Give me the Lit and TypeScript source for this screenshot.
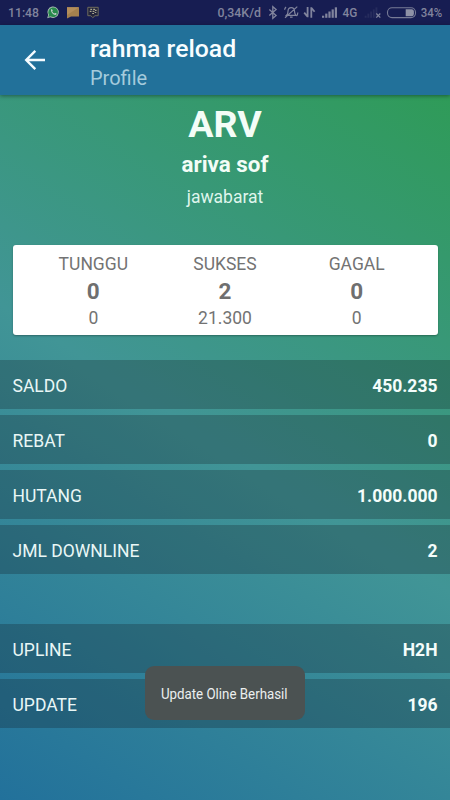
import { LitElement, html, css, svg } from "lit";
import { customElement, property } from "lit/decorators.js";

@customElement("status-bar")
class StatusBar extends LitElement {
  static styles = css`
    :host { display: block; height: 25px; background: #171d52; }
    svg { display: block; width: 100%; height: 25px; }
    text { font-family: Roboto, sans-serif; font-weight: 500; font-size: 13px; fill: #81849d; }
  `;
  render() {
    const bars = [1, 2, 3, 4, 5];
    return html`<svg viewBox="0 0 450 25">
      <text x="8" y="17.2" textLength="31" lengthAdjust="spacingAndGlyphs">11:48</text>
      <path d="M47.2 18.2l.9-3.2a5.7 5.7 0 1 1 2.2 2.2z" fill="#a5b8b0"/>
      <path d="M48.4 17l.7-2.2a4.8 4.8 0 1 1 1.5 1.5z" fill="#278a4c"/>
      <path d="M51 9.6c.6-.7 1.1-.5 1.4.2.4.9.4 1-.2 1.7.5 1 1.2 1.7 2.2 2.1.7-.8.8-.8 1.7-.3.7.3.7.7.2 1.3-1.5 1.4-5.7-1.6-5.3-5z" fill="#c2d0ca"/>
      <path d="M67 7.2h12v9.3H71l-4 2z" fill="#a5804e"/>
      <path d="M67 7.2h12L67 15z" fill="#b48d5b"/>
      <path d="M87.8 7.3h10.4v8.4h-3.2l-2.2 2-2-2h-3z" fill="#22243c" stroke="#777360" stroke-width=".9"/>
      <path d="M90.3 9.3h1.8M93.2 9.3h1.8M89.7 11.4h1.8M92.6 11.4h1.8M92.2 13.5h1.8M95 10.4h1.6M94.7 12.5h1.6" stroke="#aaa78f" stroke-width="1.2" fill="none"/>
      <text x="217.5" y="17.2" textLength="43.5" lengthAdjust="spacingAndGlyphs">0,34K/d</text>
      <path d="M269.3 9.5l6.8 6-3.3 2.8V6.7l3.3 2.8-6.8 6" fill="none" stroke="#81849d" stroke-width="1.3"/>
      <path d="M286.5 15.3c1.6-1.5 1.3-2.6 1.5-4.3.3-4.4 6.2-4.4 6.5 0 .2 1.7 0 2.8 1.5 4.3zM290 17.2h2.6M285 17.7L297.3 6.6M284.6 9.8c.1-1.2.6-2 1.4-2.8M297.8 12.5c0 1.6-.3 2.6-1.3 3.5" fill="none" stroke="#81849d" stroke-width="1.2"/>
      <path d="M307.6 7v10.300M304.2 12.6l3.4 4M311.3 17.7V7.2M311.3 7.8l3.300 4" fill="none" stroke="#81849d" stroke-width="1.8"/>
      ${bars.map((n) => svg`<rect x=${318.8 + n * 3.2} y=${17.8 - n * 2.1} width="2.2" height=${n * 2.1} fill="#81849d"/>`)}
      <text x="342.5" y="17.2" textLength="14.8" lengthAdjust="spacingAndGlyphs">4G</text>
      ${bars.map((n) => svg`<rect x=${362 + n * 2.7} y=${17.8 - n * 2.1} width="1.9" height=${n * 2.1} fill="#262c5d"/>`)}
      <path d="M376.3 13.5l4 4.2M380.3 13.5l-4 4.2" stroke="#81849d" stroke-width="1.2"/>
      <rect x="387.5" y="7.8" width="28" height="9.8" rx="4.5" fill="none" stroke="#777b96" stroke-width="1.1"/>
      <path d="M405.7 9.2h6q2.200 0 2.200 2.200v2.600q0 2.200-2.200 2.200h-6z" fill="#8f92a7"/>
      <text x="420.8" y="17.2" textLength="21.5" lengthAdjust="spacingAndGlyphs">34%</text>
    </svg>`;
  }
}

@customElement("info-row")
class InfoRow extends LitElement {
  @property() label = "";
  @property() value = "";
  static styles = css`
    :host { display: flex; justify-content: space-between; align-items: center; box-sizing: border-box; height: 48.75px; padding: 3px 12.5px 0; background: rgba(15, 20, 28, 0.25); color: #e9f7f6; font: 400 17.5px/24px Roboto, sans-serif; }
    .value { font-weight: 700; color: #f4fdfb; }
  `;
  render() {
    return html`<span>${this.label}</span><span class="value">${this.value}</span>`;
  }
}

@customElement("app-root")
class AppRoot extends LitElement {
  static styles = css`
    :host { display: block; position: relative; height: 800px; overflow: hidden; font-family: Roboto, sans-serif; }
    .page { display: flex; flex-direction: column; height: 800px; }
    .bar { display: flex; align-items: center; height: 70px; flex: none; background: #22719a; position: relative; box-shadow: 0 1px 4px rgba(0, 0, 0, 0.4); }
    .back { display: block; width: 30px; height: 30px; margin: 0 40px 0 20px; flex: none; }
    .titles { display: flex; flex-direction: column; padding-top: 6px; }
    .title { font-size: 24.8px; line-height: 30px; font-weight: 500; color: #f8fdff; }
    .sub { font-size: 20px; line-height: 29px; color: #a5cbdc; }
    .body { flex: 1; display: flex; flex-direction: column; background: linear-gradient(32.55deg, #22719b 0%, #419596 50%, #2f9b58 100%); }
    .head { display: flex; flex-direction: column; align-items: center; height: 149.5px; color: #f3fdf7; }
    .code { font-size: 37.5px; line-height: 44px; font-weight: 700; margin-top: 7px; }
    .name { font-size: 22.4px; line-height: 28px; font-weight: 700; margin-top: 4px; }
    .place { font-size: 17.5px; line-height: 24px; margin-top: 7px; color: #dff5ec; }
    .card { display: grid; grid-template-columns: repeat(3, 1fr); box-sizing: border-box; height: 90.5px; margin: 0 12.5px; padding: 7.5px 15px 0; background: #fff; border-radius: 3px; box-shadow: 0 1px 2px rgba(0, 0, 0, 0.3); color: #737373; text-align: center; }
    .cell { display: flex; flex-direction: column; font-size: 17.5px; line-height: 25px; }
    .count { font-size: 22.5px; line-height: 28.5px; font-weight: 700; color: #6f6f6f; }
    .rows { display: flex; flex-direction: column; gap: 6.25px; margin-top: 25.3px; }
    .rows.second { margin-top: 50px; }
    .toast { position: absolute; left: 145px; top: 666px; width: 160px; height: 54px; border-radius: 9px; background: #4b5252; color: #ecefef; display: flex; align-items: center; justify-content: center; font-size: 15.4px; white-space: nowrap; }
    .msg { transform: scaleX(0.865); margin-left: -1px; padding-top: 2px; }
  `;
  stats = [
    { label: "TUNGGU", count: "0", total: "0" },
    { label: "SUKSES", count: "2", total: "21.300" },
    { label: "GAGAL", count: "0", total: "0" },
  ];
  account = [["SALDO", "450.235"], ["REBAT", "0"], ["HUTANG", "1.000.000"], ["JML DOWNLINE", "2"]];
  network = [["UPLINE", "H2H"], ["UPDATE", "196"]];

  rows(list: string[][]) {
    return list.map(([l, v]) => html`<info-row .label=${l} .value=${v}></info-row>`);
  }
  render() {
    return html`<div class="page">
        <status-bar></status-bar>
        <div class="bar">
          <svg class="back" viewBox="0 0 30 30"><path d="M25 15H6.800M15.300 5.800L6.200 15l9.100 9.200" fill="none" stroke="#f6fcff" stroke-width="2.400"/></svg>
          <div class="titles"><span class="title">rahma reload</span><span class="sub">Profile</span></div>
        </div>
        <div class="body">
          <div class="head">
            <span class="code">ARV</span><span class="name">ariva sof</span><span class="place">jawabarat</span>
          </div>
          <div class="card">
            ${this.stats.map((s) => html`<div class="cell"><span>${s.label}</span><span class="count">${s.count}</span><span>${s.total}</span></div>`)}
          </div>
          <div class="rows">${this.rows(this.account)}</div>
          <div class="rows second">${this.rows(this.network)}</div>
        </div>
      </div>
      <div class="toast"><span class="msg">Update Oline Berhasil</span></div>`;
  }
}
